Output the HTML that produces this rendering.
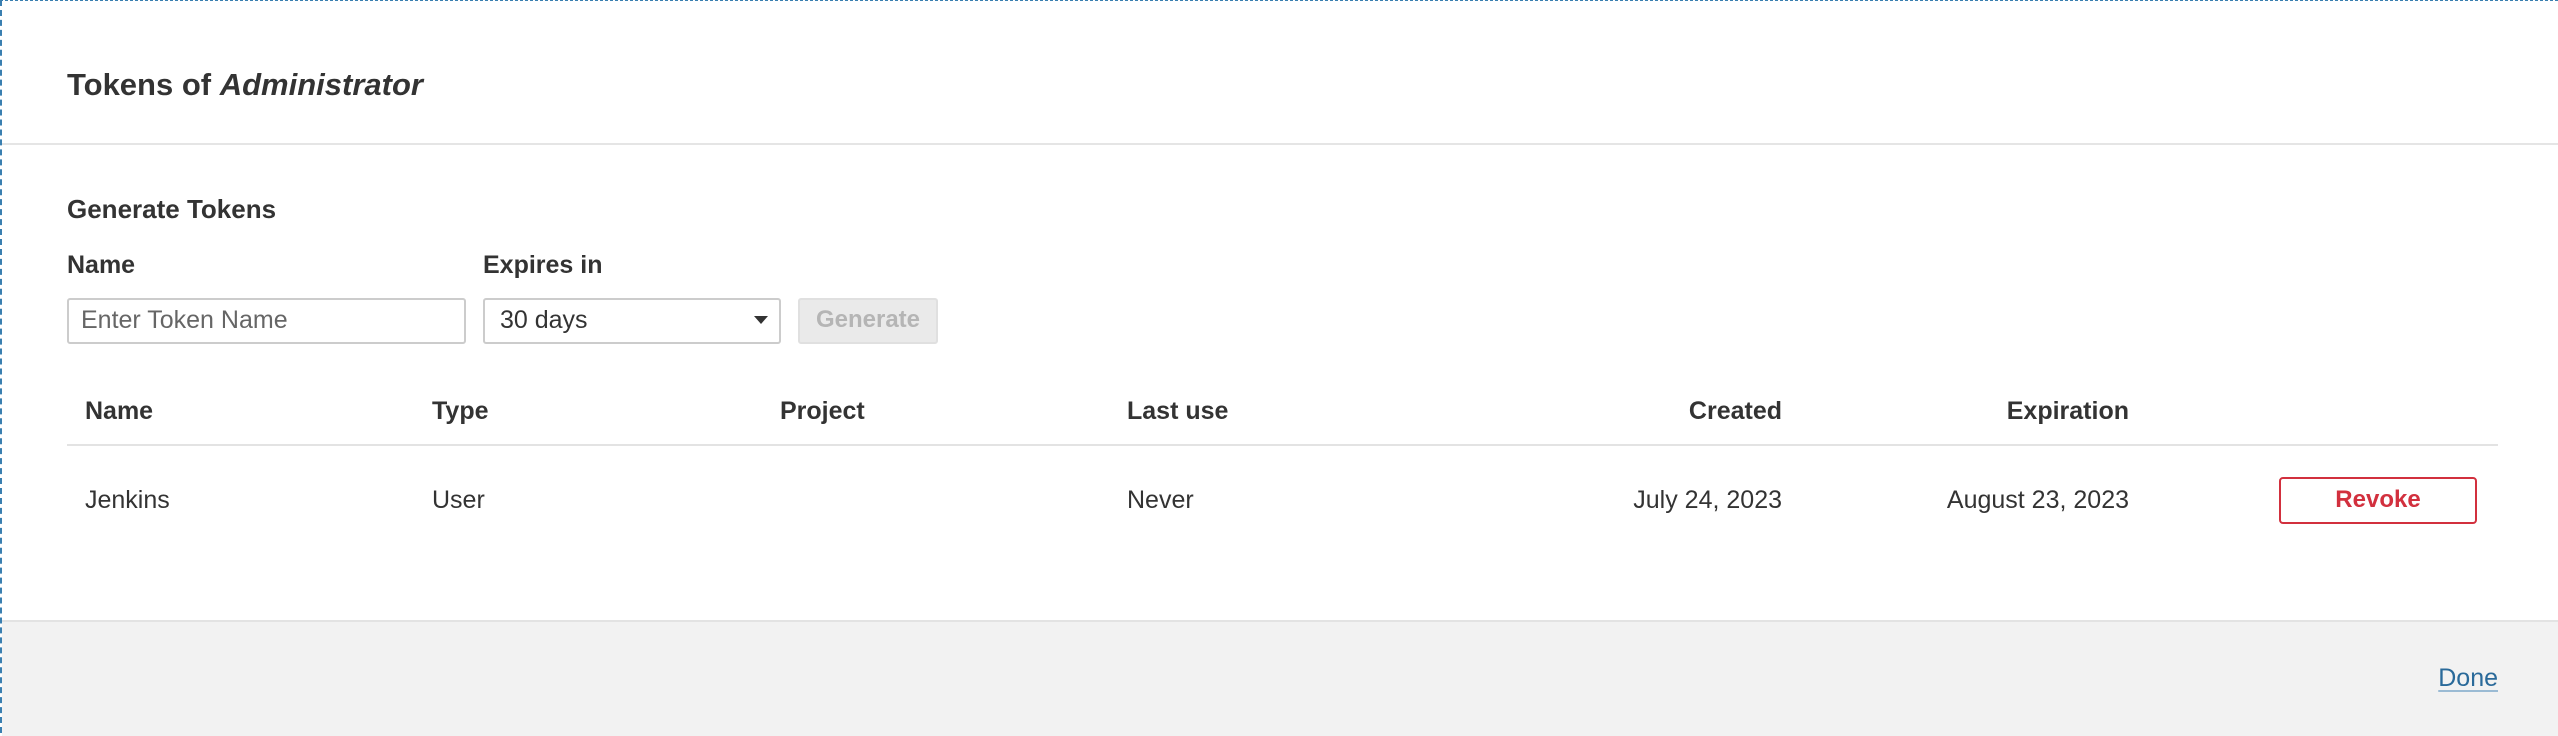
<!DOCTYPE html>
<html><head><style>
html,body{margin:0;padding:0;}
body{width:2558px;height:734px;position:relative;overflow:hidden;background:#fff;font-family:"Liberation Sans",Arial,sans-serif;color:#333;}
.a{position:absolute;white-space:nowrap;}
.b{font-weight:bold;}
.frame{position:absolute;left:0;top:0;width:2556px;height:732px;border-left:2px dashed #3a7fb0;border-top:1px dashed #3a7fb0;}
</style></head><body>
<div class="frame"></div>
<div class="a b" style="left:67px;top:67px;font-size:31px;">Tokens of <i>Administrator</i></div>
<div class="a" style="left:2px;top:143px;width:2556px;height:2px;background:#e5e5e5;"></div>
<div class="a b" style="left:67px;top:194px;font-size:26px;">Generate Tokens</div>
<div class="a b" style="left:67px;top:251px;font-size:25px;">Name</div>
<div class="a b" style="left:483px;top:251px;font-size:25px;">Expires in</div>
<div class="a" style="left:67px;top:298px;width:395px;height:42px;border:2px solid #ccc;border-radius:3px;"></div>
<div class="a" style="left:81px;top:306px;font-size:25px;color:#666;">Enter Token Name</div>
<div class="a" style="left:483px;top:298px;width:294px;height:42px;border:2px solid #ccc;border-radius:3px;"></div>
<div class="a" style="left:500px;top:306px;font-size:25px;">30 days</div>
<div class="a" style="left:754px;top:316px;width:0;height:0;border-left:7px solid transparent;border-right:7px solid transparent;border-top:8px solid #333;"></div>
<div class="a" style="left:798px;top:298px;width:136px;height:42px;border:2px solid #e0e0e0;border-radius:3px;background:#eaeaea;"></div>
<div class="a b" style="left:798px;top:306px;width:140px;text-align:center;font-size:24px;color:#b5b5b5;">Generate</div>
<div class="a b" style="left:85px;top:397px;font-size:25px;">Name</div>
<div class="a b" style="left:432px;top:397px;font-size:25px;">Type</div>
<div class="a b" style="left:780px;top:397px;font-size:25px;">Project</div>
<div class="a b" style="left:1127px;top:397px;font-size:25px;">Last use</div>
<div class="a b" style="left:1482px;width:300px;text-align:right;top:397px;font-size:25px;">Created</div>
<div class="a b" style="left:1829px;width:300px;text-align:right;top:397px;font-size:25px;">Expiration</div>
<div class="a" style="left:67px;top:444px;width:2431px;height:2px;background:#e3e3e3;"></div>
<div class="a" style="left:85px;top:486px;font-size:25px;">Jenkins</div>
<div class="a" style="left:432px;top:486px;font-size:25px;">User</div>
<div class="a" style="left:1127px;top:486px;font-size:25px;">Never</div>
<div class="a" style="left:1482px;width:300px;text-align:right;top:486px;font-size:25px;">July 24, 2023</div>
<div class="a" style="left:1829px;width:300px;text-align:right;top:486px;font-size:25px;">August 23, 2023</div>
<div class="a" style="left:2279px;top:477px;width:194px;height:43px;border:2px solid #d2303e;border-radius:4px;"></div>
<div class="a b" style="left:2279px;top:486px;width:198px;text-align:center;font-size:24px;color:#d2303e;">Revoke</div>
<div class="a" style="left:2px;top:620px;width:2556px;height:114px;background:#f2f2f2;border-top:2px solid #e3e3e3;"></div>
<div class="a" style="left:2398px;width:100px;text-align:right;top:664px;font-size:25px;color:#2a6a9a;text-decoration:underline;text-decoration-color:#9bbbd4;text-underline-offset:4px;">Done</div>
</body></html>
